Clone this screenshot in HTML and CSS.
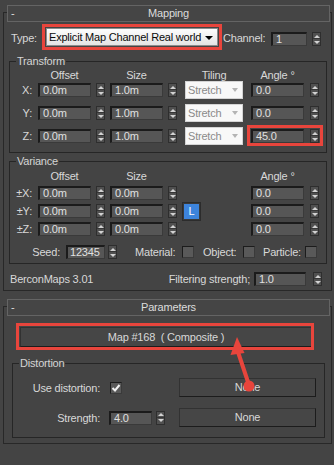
FILE: index.html
```html
<!DOCTYPE html>
<html>
<head>
<meta charset="utf-8">
<link rel="stylesheet" href="styles.css">
</head>
<body>
<div class="page">
  <section class="rollout">
    <div class="rhead"><span class="minus">-</span><span class="rtitle">Mapping</span></div>
    <div class="type-row">
      <span class="lbl-type">Type:</span>
      <div class="combo"><span>Explicit Map Channel Real world</span><span class="combo-arrow"></span></div>
      <span class="lbl-chan">Channel:</span>
      <div class="num w-chan">1</div>
      <div class="spin sp-chan"></div>
    </div>

    <div class="group g-transform">
      <div class="gtitle">Transform</div>
      <div class="tgrid hdr">
        <span class="c-off">Offset</span><span class="c-size">Size</span><span class="c-til">Tiling</span><span class="c-ang">Angle °</span>
      </div>
      <div class="tgrid trow first">
        <span class="c-lbl">X:</span>
        <div class="num c-off">0.0m</div><div class="spin c-sp1"></div>
        <div class="num c-size">1.0m</div><div class="spin c-sp2"></div>
        <div class="tcombo c-til"><span>Stretch</span><span class="tcombo-arrow"></span></div>
        <div class="num c-ang">0.0</div><div class="spin c-sp3"></div>
      </div>
      <div class="tgrid trow">
        <span class="c-lbl">Y:</span>
        <div class="num c-off">0.0m</div><div class="spin c-sp1"></div>
        <div class="num c-size">1.0m</div><div class="spin c-sp2"></div>
        <div class="tcombo c-til"><span>Stretch</span><span class="tcombo-arrow"></span></div>
        <div class="num c-ang">0.0</div><div class="spin c-sp3"></div>
      </div>
      <div class="tgrid trow">
        <span class="c-lbl">Z:</span>
        <div class="num c-off">0.0m</div><div class="spin c-sp1"></div>
        <div class="num c-size">1.0m</div><div class="spin c-sp2"></div>
        <div class="tcombo c-til"><span>Stretch</span><span class="tcombo-arrow"></span></div>
        <div class="num c-ang">45.0</div><div class="spin c-sp3"></div>
      </div>
    </div>

    <div class="group g-variance">
      <div class="gtitle">Variance</div>
      <div class="tgrid hdr vhdr">
        <span class="c-off">Offset</span><span class="c-size">Size</span><span class="c-ang">Angle °</span>
      </div>
      <div class="tgrid vrow">
        <span class="c-lbl">±X:</span>
        <div class="num c-off">0.0m</div><div class="spin c-sp1"></div>
        <div class="num c-size">0.0m</div><div class="spin c-sp2"></div>
        <div class="num c-ang">0.0</div><div class="spin c-sp3"></div>
      </div>
      <div class="tgrid vrow">
        <span class="c-lbl">±Y:</span>
        <div class="num c-off">0.0m</div><div class="spin c-sp1"></div>
        <div class="num c-size">0.0m</div><div class="spin c-sp2"></div>
        <div class="lock c-lock">L</div>
        <div class="num c-ang">0.0</div><div class="spin c-sp3"></div>
      </div>
      <div class="tgrid vrow">
        <span class="c-lbl">±Z:</span>
        <div class="num c-off">0.0m</div><div class="spin c-sp1"></div>
        <div class="num c-size">0.0m</div><div class="spin c-sp2"></div>
        <div class="num c-ang">0.0</div><div class="spin c-sp3"></div>
      </div>
      <div class="seed-row">
        <span class="lbl-seed">Seed:</span>
        <div class="num w-seed">12345</div>
        <div class="spin sp-seed"></div>
        <span class="lbl-mat">Material:</span><div class="check"></div>
        <span class="lbl-obj">Object:</span><div class="check"></div>
        <span class="lbl-part">Particle:</span><div class="check"></div>
      </div>
    </div>

    <div class="bercon-row">
      <span class="ver">BerconMaps 3.01</span>
      <span class="lbl-filter">Filtering strength;</span>
      <div class="num w-filter">1.0</div>
      <div class="spin sp-filter"></div>
    </div>
  </section>

  <section class="rollout r2">
    <div class="rhead"><span class="minus">-</span><span class="rtitle">Parameters</span></div>
    <div class="btn map-btn">Map #168&nbsp; ( Composite )</div>
    <div class="group g-dist">
      <div class="gtitle">Distortion</div>
      <div class="drow first">
        <span class="dlbl">Use distortion:</span>
        <div class="check checked"><svg width="10" height="10" viewBox="0 0 10 10"><polyline points="1.5,5 4,7.5 8.5,2" fill="none" stroke="#f2f2f2" stroke-width="2"/></svg></div>
        <div class="btn none-btn">None</div>
      </div>
      <div class="drow">
        <span class="dlbl">Strength:</span>
        <div class="num w-str">4.0</div>
        <div class="spin sp-str"></div>
        <div class="btn none-btn">None</div>
      </div>
    </div>
  </section>

  <div class="mark mark-type"></div>
  <div class="mark mark-angle"></div>
  <div class="mark mark-map"></div>
  <svg class="arrow" width="334" height="465" viewBox="0 0 334 465">
    <polygon points="237,337 230.5,355 244.5,353" fill="#e8453c"/>
    <line x1="238" y1="352" x2="249" y2="385" stroke="#e8453c" stroke-width="4" stroke-linecap="round"/>
    <circle cx="249" cy="386" r="5.5" fill="#e8453c"/>
  </svg>
</div>
</body>
</html>
```

FILE: styles.css
```css
* { box-sizing: border-box; }
html, body { margin: 0; padding: 0; }
body {
  background: #444444;
  font-family: "Liberation Sans", Arial, sans-serif;
  font-size: 11px;
  letter-spacing: -0.2px;
  color: #d8d8d8;
}
.page {
  position: relative;
  width: 334px;
  height: 465px;
  overflow: hidden;
  padding-top: 12px;
}

/* rollouts */
.rollout {
  margin: 0 2px 0 3px;
  border: 1px solid #282828;
  padding-bottom: 4px;
}
.r2 { margin-top: 15px; padding-bottom: 5px; }
.rhead {
  display: grid;
  grid-template-columns: 18px 1fr 18px;
  height: 17px;
  margin: -8px 1px 0 3px;
  border: 1px solid #646464;
  background: #454545;
  line-height: 15px;
  color: #dcdcdc;
}
.minus { padding-left: 3px; }
.rtitle { text-align: center; }

/* type row */
.type-row {
  display: flex;
  align-items: center;
  height: 18px;
  margin-top: 6px;
  padding-left: 7px;
}
.type-row > *, .seed-row > *, .bercon-row > *, .drow > * { flex-shrink: 0; }
.lbl-type { width: 31px; padding-top: 2px; }
.combo {
  width: 172px;
  height: 18px;
  margin-left: 4px;
  border: 1px solid #8c8c8c;
  background: linear-gradient(#fdfdfd, #e4e4e4);
  color: #0a0a0a;
  display: flex;
  align-items: center;
  justify-content: space-between;
  padding: 0 4px 0 2px;
  white-space: nowrap;
  overflow: hidden;
}
.combo-arrow {
  border-left: 4px solid transparent;
  border-right: 4px solid transparent;
  border-top: 4px solid #000;
  margin-top: 1px;
}
.lbl-chan { width: 48px; margin-left: 5px; padding-top: 2px; }
.w-chan { width: 36px; height: 15px; align-self: flex-end; }
.sp-chan { margin-left: 5px; align-self: flex-end; }

/* inputs */
.num {
  height: 14px;
  background: #565656;
  border-top: 2px solid #1b1b1b;
  border-left: 2px solid #1b1b1b;
  border-right: 1px solid #3a3a3a;
  border-bottom: 1px solid #3a3a3a;
  padding-left: 3px;
  line-height: 11px;
  color: #e0e0e0;
  white-space: nowrap;
  overflow: hidden;
}
.spin {
  width: 9px;
  height: 14px;
  border: 1px solid #2e2e2e;
  background: linear-gradient(#505050 0 5px, #363636 5px 6px, #505050 6px);
  display: flex;
  flex-direction: column;
  align-items: center;
  justify-content: space-around;
}
.spin::before {
  content: "";
  border-left: 3px solid transparent;
  border-right: 3px solid transparent;
  border-bottom: 3px solid #d2d2d2;
}
.spin::after {
  content: "";
  border-left: 3px solid transparent;
  border-right: 3px solid transparent;
  border-top: 3px solid #d2d2d2;
}

/* groups */
.group {
  border: 1px solid #262626;
  margin: 15px 4px 0 5px;
}
.g-transform { padding-bottom: 7px; }
.g-variance { margin-top: 8px; padding-bottom: 4px; }
.gtitle {
  width: max-content;
  margin: -7px 0 0 6px;
  padding: 0 1px;
  background: #444444;
  line-height: 13px;
  color: #d4d4d4;
}

.tgrid {
  display: grid;
  grid-template-columns: 28px 53px 5px 9px 5px 53px 5px 9px 8px 58px 8px 53px 6px 9px;
  align-items: center;
}
.hdr { height: 12px; grid-template-rows: 12px; line-height: 12px; margin-top: 1px; }
.hdr span { text-align: center; }
.vhdr { margin-top: 2px; }
.trow { height: 18px; grid-template-rows: 18px; margin-top: 5px; }
.trow.first { margin-top: 0; }
.vrow { height: 14px; grid-template-rows: 14px; margin-top: 4px; }
.c-lbl { grid-column: 1; text-align: right; padding-right: 6px; }
.c-off { grid-column: 2; }
.c-sp1 { grid-column: 4; }
.c-size { grid-column: 6; }
.c-sp2 { grid-column: 8; }
.c-til { grid-column: 10; }
.c-lock { grid-column: 9 / 11; margin-left: 5px; }
.c-ang { grid-column: 12; }
.c-sp3 { grid-column: 14; }

.tcombo {
  height: 18px;
  border: 1px solid #d4d4d4;
  background: #f8f8f8;
  color: #8a8a8a;
  display: flex;
  align-items: center;
  justify-content: space-between;
  padding: 0 4px 0 2px;
}
.tcombo-arrow {
  border-left: 3.5px solid transparent;
  border-right: 3.5px solid transparent;
  border-top: 4px solid #b4b4b4;
}

.lock {
  width: 19px;
  height: 19px;
  align-self: center;
  border: 1px solid #2c2c2c;
  background: #3d84dc;
  box-shadow: inset 0 0 0 1px #3a3a3a;
  color: #ffffff;
  text-align: center;
  line-height: 17px;
}

.seed-row {
  display: flex;
  align-items: center;
  height: 14px;
  margin-top: 9px;
}
.lbl-seed { width: 54px; text-align: right; padding-right: 4px; }
.w-seed { width: 39px; margin-left: 2px; padding-left: 2px; }
.sp-seed { margin-left: 3px; }
.lbl-mat { width: 47px; margin-left: 18px; }
.lbl-obj { width: 40px; margin-left: 9px; }
.lbl-part { width: 42px; margin-left: 8px; }
.check {
  width: 12px;
  height: 12px;
  background: #595959;
  border-top: 1px solid #1c1c1c;
  border-left: 1px solid #1c1c1c;
  border-right: 1px solid #3a3a3a;
  border-bottom: 1px solid #3a3a3a;
  display: flex;
  align-items: center;
  justify-content: center;
}

.bercon-row {
  display: flex;
  align-items: center;
  height: 14px;
  margin-top: 8px;
  padding: 0 9px 0 6px;
}
.lbl-filter { margin-left: auto; }
.w-filter { width: 52px; margin-left: 4px; }
.sp-filter { margin-left: 7px; }

/* buttons */
.btn {
  background: #464646;
  border: 1px solid #323232;
  border-right-color: #1c1c1c;
  border-bottom-color: #1c1c1c;
  color: #d8d8d8;
  text-align: center;
}
.map-btn {
  width: 292px;
  height: 20px;
  margin: 11px 0 0 16px;
  line-height: 18px;
}
.g-dist {
  margin: 16px 6px 0 8px;
  padding: 0 8px 10px 0;
}
.drow {
  display: flex;
  align-items: center;
  height: 19px;
  margin-top: 11px;
}
.drow.first { margin-top: 8px; }
.dlbl { width: 96px; text-align: right; padding-right: 9px; }
.checked { margin-left: 1px; }
.w-str { width: 43px; }
.sp-str { margin-left: 4px; }
.none-btn {
  width: 137px;
  height: 19px;
  margin-left: auto;
  line-height: 17px;
}

/* annotations */
.mark {
  position: absolute;
  border: 3px solid #e8453c;
}
.mark-type { left: 42px; top: 24px; width: 180px; height: 26px; }
.mark-angle { left: 247px; top: 125px; width: 76px; height: 21px; }
.mark-map { left: 16px; top: 323px; width: 298px; height: 27px; }
.arrow {
  position: absolute;
  left: 0;
  top: 0;
}
```
